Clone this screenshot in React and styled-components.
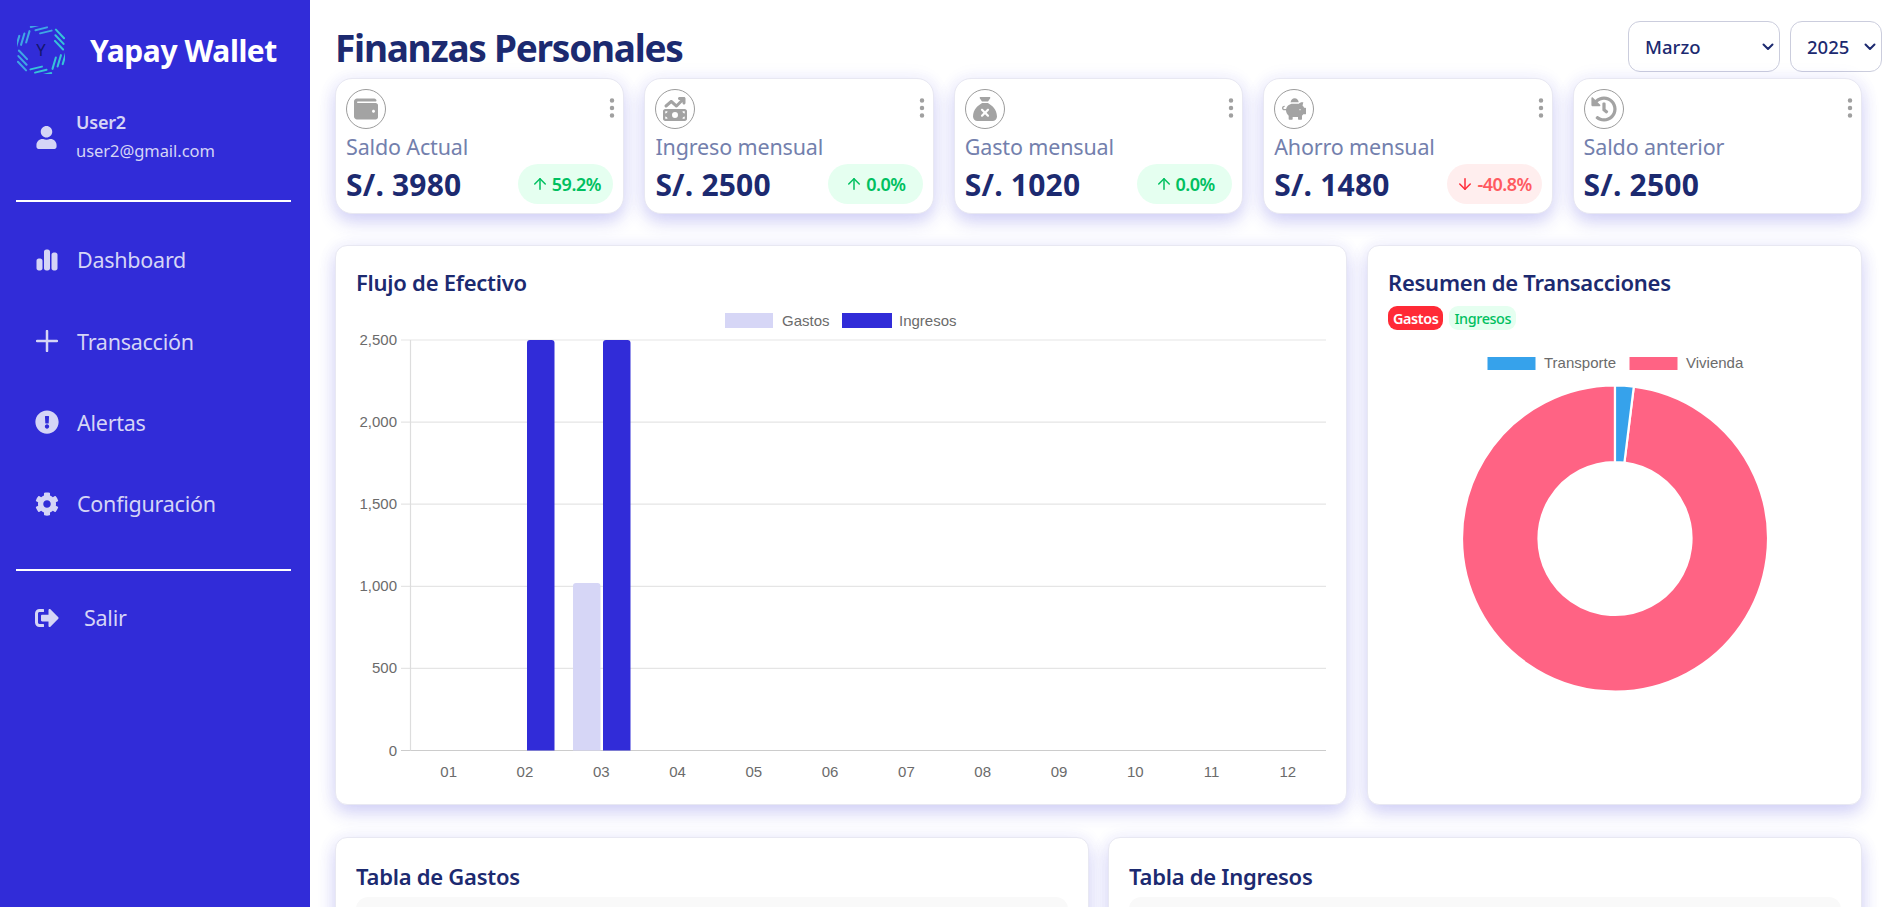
import React from 'react';
import styled, {createGlobalStyle} from 'styled-components';
import {FaUser, FaExclamationCircle, FaCog, FaSignOutAlt, FaWallet, FaPiggyBank, FaHistory} from 'react-icons/fa';
import {FaChartSimple, FaMoneyBillTrendUp, FaSackXmark} from 'react-icons/fa6';
import {BsThreeDotsVertical} from 'react-icons/bs';
import {FiArrowUp, FiArrowDown} from 'react-icons/fi';

const navy = '#1c2a70';
const indigo = '#312cd8';
const lilac = '#d5d5f6';
const uiFont = '"Noto Sans", "Open Sans", sans-serif';
const chartFont = '"Liberation Sans", Arial, sans-serif';

const chevron = "data:image/svg+xml,%3Csvg xmlns='http://www.w3.org/2000/svg' viewBox='0 0 12 8'%3E%3Cpath d='M1.5 1.5 6 6l4.5-4.5' fill='none' stroke='%231c2a70' stroke-width='2' stroke-linecap='round' stroke-linejoin='round'/%3E%3C/svg%3E";

const GlobalStyle = createGlobalStyle`
  html, body {
    margin: 0;
    height: 100%;
    overflow: hidden;
    background: #fff;
    font-family: ${uiFont};
  }
  * { box-sizing: border-box; }
`;

const Layout = styled.div`
  display: flex;
  width: 100vw;
  height: 100vh;
  overflow: hidden;
`;

const Sidebar = styled.aside`
  flex: 0 0 310px;
  background: ${indigo};
  color: ${lilac};
  padding: 0 19px 0 16px;
`;

const Brand = styled.div`
  display: flex;
  align-items: center;
  height: 100px;
  padding-left: 1px;
  gap: 25px;
`;

const BrandName = styled.div`
  color: #fff;
  font-size: 30px;
  font-weight: 700;
  letter-spacing: -0.45px;
  white-space: nowrap;
`;

const UserRow = styled.div`
  display: flex;
  align-items: center;
  gap: 18px;
  height: 68px;
  margin-top: 3px;
  padding-left: 19px;
  svg { font-size: 23px; }
`;

const UserName = styled.div`
  font-size: 18px;
  font-weight: 600;
  line-height: 27px;
  letter-spacing: -0.2px;
`;

const UserMail = styled.div`
  font-size: 16.5px;
  line-height: 29px;
  letter-spacing: -0.05px;
`;

const Divider = styled.div`
  height: 2px;
  background: #fff;
  margin-top: ${p => p.$top}px;
`;

const Nav = styled.nav`
  margin-top: 17px;
`;

const NavItem = styled.div`
  display: flex;
  align-items: center;
  height: ${p => p.$height || 81.4}px;
  padding-left: 19px;
  gap: ${p => p.$gap || 18}px;
  font-size: 21.5px;
  letter-spacing: -0.25px;
`;

const NavIcon = styled.span`
  flex: 0 0 24px;
  display: flex;
  justify-content: center;
  font-size: ${p => p.$size || 24}px;
`;

const Main = styled.main`
  flex: 1;
  min-width: 0;
  padding: 21px 3px 0 25px;
  overflow: hidden;
`;

const Header = styled.header`
  display: flex;
  justify-content: space-between;
  align-items: center;
  height: 51px;
  margin-bottom: 6px;
`;

const Title = styled.h1`
  margin: 3px 0 0;
  color: ${navy};
  font-size: 37px;
  font-weight: 700;
  letter-spacing: -1.25px;
  line-height: 48px;
`;

const Filters = styled.div`
  display: flex;
  gap: 10px;
`;

const Select = styled.select`
  appearance: none;
  width: ${p => p.$width}px;
  height: 51px;
  padding-left: 16px;
  border: 1px solid #cbcddd;
  border-radius: 12px;
  background: #fff url("${chevron}") no-repeat right 5px center / 12px 8px;
  color: ${navy};
  font-family: ${uiFont};
  font-size: 18.5px;
  font-weight: 500;
  outline: none;
`;

const Cards = styled.section`
  display: grid;
  grid-template-columns: repeat(5, 1fr);
  gap: 20px;
  margin-right: 20px;
  margin-bottom: 31px;
`;

const Surface = styled.div`
  background: #fff;
  border: 1px solid #e8e8f2;
  box-shadow: 0 8px 18px rgba(49, 44, 216, 0.2), 0 0 20px rgba(49, 44, 216, 0.06);
`;

const Card = styled(Surface)`
  height: 136px;
  border-radius: 17px;
  padding: 10px 10px 0;
`;

const CardTop = styled.div`
  display: flex;
  justify-content: space-between;
  align-items: center;
  height: 40px;
  color: #a0a0a0;
  > svg { font-size: 24px; margin: 0 -11px 2px 0; }
`;

const IconCircle = styled.div`
  width: 40px;
  height: 40px;
  border: 1px solid #9c9c9c;
  border-radius: 50%;
  display: flex;
  align-items: center;
  justify-content: center;
  font-size: ${p => p.$size || 24}px;
  color: #a3a3a3;
`;

const CardLabel = styled.div`
  margin-top: 3px;
  color: #7380ad;
  font-size: 21.5px;
  line-height: 30px;
  letter-spacing: -0.15px;
`;

const CardBottom = styled.div`
  display: flex;
  justify-content: space-between;
  align-items: center;
  height: 40px;
  margin-top: 2px;
`;

const CardValue = styled.div`
  color: ${navy};
  font-size: 30px;
  font-weight: 700;
  letter-spacing: 0.2px;
`;

const Trend = styled.div`
  width: 95px;
  height: 40px;
  border-radius: 20px;
  display: flex;
  align-items: center;
  justify-content: center;
  gap: 3px;
  background: ${p => (p.$down ? '#ffeeee' : '#e5fff0')};
  color: ${p => (p.$down ? '#ff5a60' : '#00c060')};
  font-size: 18px;
  font-weight: 600;
  letter-spacing: -0.5px;
  svg { color: ${p => (p.$down ? '#ff2d3a' : '#00c060')}; font-size: 18px; }
`;

const ChartsRow = styled.section`
  display: grid;
  grid-template-columns: 1012px 495px;
  gap: 20px;
  margin-bottom: 32px;
`;

const Panel = styled(Surface)`
  height: 560px;
  border-radius: 12px;
  padding: 19px 20px 0;
`;

const PanelTitle = styled.h2`
  margin: 0;
  color: ${navy};
  font-size: 22px;
  font-weight: 600;
  line-height: 35px;
  letter-spacing: -0.25px;
`;

const ChartSvg = styled.svg`
  display: block;
  margin-top: ${p => p.$top || 0}px;
  text { font-family: ${chartFont}; font-size: 15px; fill: #6b6b6b; }
`;

const Pills = styled.div`
  display: flex;
  gap: 6px;
  height: 24px;
  margin-top: 6px;
`;

const Pill = styled.span`
  display: flex;
  align-items: center;
  padding: 0 5px;
  border-radius: 9px;
  font-size: 14.4px;
  font-weight: ${p => (p.$active ? 600 : 500)};
  letter-spacing: -0.4px;
  background: ${p => (p.$active ? '#ff2a36' : '#e5fff0')};
  color: ${p => (p.$active ? '#fff' : '#00c060')};
`;

const TablesRow = styled.section`
  display: grid;
  grid-template-columns: 754px 754px;
  gap: 19px;
`;

const TablePanel = styled(Panel)`
  height: 300px;
  padding-top: 21px;
`;

const TableHead = styled.div`
  height: 48px;
  margin-top: 3px;
  background: #f9f9f9;
  border-radius: 12px 12px 0 0;
`;

const cards = [
    {label: 'Saldo Actual', value: 'S/. 3980', trend: '59.2%', icon: <FaWallet/>},
    {label: 'Ingreso mensual', value: 'S/. 2500', trend: '0.0%', icon: <FaMoneyBillTrendUp/>},
    {label: 'Gasto mensual', value: 'S/. 1020', trend: '0.0%', icon: <FaSackXmark/>},
    {label: 'Ahorro mensual', value: 'S/. 1480', trend: '-40.8%', down: true, icon: <FaPiggyBank/>},
    {label: 'Saldo anterior', value: 'S/. 2500', icon: <FaHistory/>, size: 26},
];

const meses = ['01', '02', '03', '04', '05', '06', '07', '08', '09', '10', '11', '12'];
const months = ['Enero', 'Febrero', 'Marzo', 'Abril', 'Mayo', 'Junio', 'Julio', 'Agosto', 'Septiembre', 'Octubre', 'Noviembre', 'Diciembre'];

function Logo() {
    const groups = [0, 60, 120, 180, 240, 300];
    const dashes = [[-11, -25], [-6, -21.5], [-1, -18]];
    return (
        <svg width="48" height="48" viewBox="-26 -26 52 52" style={{flex: 'none'}}>
            {groups.map(angle => (
                <g key={angle} transform={`rotate(${angle})`}>
                    {dashes.map(([x, y]) => (
                        <line key={x} x1={x} y1={y} x2={x + 12.5} y2={y - 3} stroke={angle > 180 || angle === 0 ? '#3fa6e4' : '#36c3d8'} strokeWidth="2.2" strokeLinecap="round"/>
                    ))}
                </g>
            ))}
            <text x="0" y="6.5" textAnchor="middle" fontSize="18" fill="#14166e" fontFamily={uiFont}>Y</text>
        </svg>
    );
}

function CashFlowChart() {
    const left = 410.5;
    const right = 1326;
    const top = 340;
    const bottom = 750.5;
    const step = (right - left) / 12;
    const yFor = v => bottom - (v / 2500) * (bottom - top);
    const bar = (x, w, y, fill) => (
        <path d={`M${x} ${bottom}V${y + 3}q0-3 3-3H${x + w - 3}q3 0 3 3V${bottom}Z`} fill={fill}/>
    );
    return (
        <ChartSvg width="970" height="485" viewBox="356 300 970 485">
            <rect x="725" y="313" width="48" height="15" fill="#d6d6f6"/>
            <text x="782" y="325.5">Gastos</text>
            <rect x="842" y="313" width="50" height="15" fill={indigo}/>
            <text x="899" y="325.5">Ingresos</text>
            {[0, 500, 1000, 1500, 2000, 2500].map(v => (
                <g key={v}>
                    <line x1="401" x2={right} y1={yFor(v)} y2={yFor(v)} stroke={v === 0 ? '#ccc' : '#e5e5e5'} strokeWidth="1.2"/>
                    <text x="397" y={yFor(v) + 5} textAnchor="end">{v.toLocaleString('en-US')}</text>
                </g>
            ))}
            <line x1={left} x2={left} y1={top} y2={bottom} stroke="#ddd" strokeWidth="1.2"/>
            {meses.map((m, i) => (
                <text key={m} x={left + step * (i + 0.5)} y="777" textAnchor="middle">{m}</text>
            ))}
            {bar(527, 27.5, top, indigo)}
            {bar(573, 27.5, yFor(1020), '#d6d6f6')}
            {bar(603, 27.5, top, indigo)}
        </ChartSvg>
    );
}

function slice(cx, cy, outer, inner, from, to) {
    const point = (r, a) => {
        const rad = (a - 90) * Math.PI / 180;
        return `${cx + r * Math.cos(rad)} ${cy + r * Math.sin(rad)}`;
    };
    const large = to - from > 180 ? 1 : 0;
    return `M${point(outer, from)}A${outer} ${outer} 0 ${large} 1 ${point(outer, to)}L${point(inner, to)}A${inner} ${inner} 0 ${large} 0 ${point(inner, from)}Z`;
}

function SummaryChart() {
    const sweep = (20 / 1020) * 360;
    return (
        <ChartSvg $top={15} width="453" height="355" viewBox="1388 345 453 355">
            <rect x="1487.5" y="357" width="48" height="13" fill="#36a2eb"/>
            <text x="1544" y="368">Transporte</text>
            <rect x="1629.5" y="357" width="48" height="13" fill="#ff6384"/>
            <text x="1686" y="368">Vivienda</text>
            <path d={slice(1615, 538.5, 153, 76.5, sweep, 360)} fill="#ff6384" stroke="#fff" strokeWidth="2.2"/>
            <path d={slice(1615, 538.5, 153, 76.5, 0, sweep)} fill="#36a2eb" stroke="#fff" strokeWidth="2.2"/>
        </ChartSvg>
    );
}

function PlusIcon() {
    return (
        <svg width="22" height="22" viewBox="0 0 22 22">
            <path d="M11 1v20M1 11h20" stroke="currentColor" strokeWidth="2.5" strokeLinecap="round"/>
        </svg>
    );
}

class App extends React.Component {
    render() {
        return (
            <Layout>
                <GlobalStyle/>
                <Sidebar>
                    <Brand>
                        <Logo/>
                        <BrandName>Yapay Wallet</BrandName>
                    </Brand>
                    <UserRow>
                        <FaUser/>
                        <div>
                            <UserName>User2</UserName>
                            <UserMail>user2@gmail.com</UserMail>
                        </div>
                    </UserRow>
                    <Divider $top={29}/>
                    <Nav>
                        <NavItem><NavIcon><FaChartSimple/></NavIcon>Dashboard</NavItem>
                        <NavItem><NavIcon><PlusIcon/></NavIcon>Transacción</NavItem>
                        <NavItem><NavIcon><FaExclamationCircle/></NavIcon>Alertas</NavItem>
                        <NavItem><NavIcon><FaCog/></NavIcon>Configuración</NavItem>
                    </Nav>
                    <Divider $top={24}/>
                    <NavItem $height={94} $gap={25}><NavIcon><FaSignOutAlt/></NavIcon>Salir</NavItem>
                </Sidebar>
                <Main>
                    <Header>
                        <Title>Finanzas Personales</Title>
                        <Filters>
                            <Select $width={152} defaultValue="Marzo">
                                {months.map(m => <option key={m}>{m}</option>)}
                            </Select>
                            <Select $width={92} defaultValue="2025">
                                <option>2024</option>
                                <option>2025</option>
                            </Select>
                        </Filters>
                    </Header>
                    <Cards>
                        {cards.map(c => (
                            <Card key={c.label}>
                                <CardTop>
                                    <IconCircle $size={c.size}>{c.icon}</IconCircle>
                                    <BsThreeDotsVertical/>
                                </CardTop>
                                <CardLabel>{c.label}</CardLabel>
                                <CardBottom>
                                    <CardValue>{c.value}</CardValue>
                                    {c.trend && (
                                        <Trend $down={c.down}>
                                            {c.down ? <FiArrowDown/> : <FiArrowUp/>}
                                            {c.trend}
                                        </Trend>
                                    )}
                                </CardBottom>
                            </Card>
                        ))}
                    </Cards>
                    <ChartsRow>
                        <Panel>
                            <PanelTitle>Flujo de Efectivo</PanelTitle>
                            <CashFlowChart/>
                        </Panel>
                        <Panel>
                            <PanelTitle>Resumen de Transacciones</PanelTitle>
                            <Pills>
                                <Pill $active>Gastos</Pill>
                                <Pill>Ingresos</Pill>
                            </Pills>
                            <SummaryChart/>
                        </Panel>
                    </ChartsRow>
                    <TablesRow>
                        <TablePanel>
                            <PanelTitle>Tabla de Gastos</PanelTitle>
                            <TableHead/>
                        </TablePanel>
                        <TablePanel>
                            <PanelTitle>Tabla de Ingresos</PanelTitle>
                            <TableHead/>
                        </TablePanel>
                    </TablesRow>
                </Main>
            </Layout>
        );
    }
}

export default App;
